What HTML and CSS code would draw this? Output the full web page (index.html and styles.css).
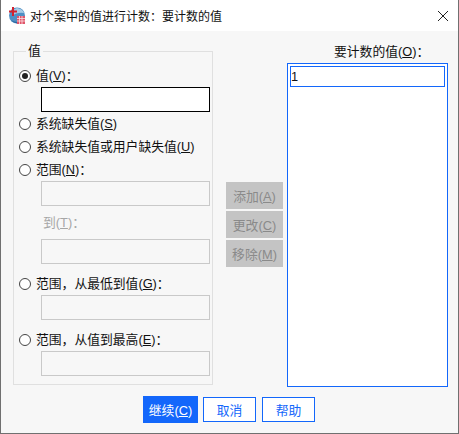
FILE: index.html
```html
<!DOCTYPE html>
<html lang="zh-CN">
<head>
  <meta charset="UTF-8" />
  <title>对个案中的值进行计数&#xFF1A;要计数的值</title>
  <link rel="stylesheet" href="styles.css">
</head>
<body>
  <div class="dialog">

    <!-- Title bar -->
    <div class="titlebar">
      <svg class="app-icon" width="16" height="17" viewBox="0 0 16 17">
        <circle cx="8" cy="8.5" r="8" fill="#4f8fc4"/>
        <path d="M3 9 Q8 5 15 6 Q14 2 8 1 Q4 2 3 5 Z" fill="#a9cbe6"/>
        <path d="M2 13 Q5 15 8 15 L8 16.5 Q4 16 2 13 Z" fill="#2c659c"/>
        <rect x="3" y="0" width="2" height="9" fill="#d2232f"/>
        <rect x="0" y="3.5" width="8" height="2" fill="#d2232f"/>
        <rect x="8" y="9" width="8" height="8" fill="#e0556a"/>
        <path d="M8 11.5 H16 M8 14 H16 M10.5 9 V17 M13 9 V17" stroke="#fbe3e6" stroke-width="0.8"/>
      </svg>
      <span class="title">对个案中的值进行计数&#xFF1A;要计数的值</span>
      <svg class="close" width="10" height="10" viewBox="0 0 10 10">
        <path d="M0 0 L10 10 M10 0 L0 10" stroke="#222" stroke-width="1" fill="none"/>
      </svg>
    </div>

    <div class="content">
      <div class="columns">

        <!-- Value group -->
        <fieldset class="group">
          <legend>值</legend>
          <label class="radio-row first"><span class="radio checked"></span>值(<u>V</u>)&#xFF1A;</label>
          <div class="field active"></div>
          <label class="radio-row"><span class="radio"></span>系统缺失值(<u>S</u>)</label>
          <label class="radio-row"><span class="radio"></span>系统缺失值或用户缺失值(<u>U</u>)</label>
          <label class="radio-row"><span class="radio"></span>范围(<u>N</u>)&#xFF1A;</label>
          <div class="field"></div>
          <div class="to-label">到(<u>T</u>)&#xFF1A;</div>
          <div class="field"></div>
          <label class="radio-row spaced"><span class="radio"></span>范围&#xFF0C;从最低到值(<u>G</u>)&#xFF1A;</label>
          <div class="field"></div>
          <label class="radio-row spaced"><span class="radio"></span>范围&#xFF0C;从值到最高(<u>E</u>)&#xFF1A;</label>
          <div class="field"></div>
        </fieldset>

        <!-- Add / change / remove -->
        <div class="actions">
          <button class="action">添加(<u>A</u>)</button>
          <button class="action">更改(<u>C</u>)</button>
          <button class="action">移除(<u>M</u>)</button>
        </div>

        <!-- Values to count -->
        <div class="values">
          <div class="values-label">要计数的值(<u>O</u>)&#xFF1A;</div>
          <div class="list">
            <div class="list-item">1</div>
          </div>
        </div>
      </div>

      <div class="footer">
        <button class="btn primary">继续(<u>C</u>)</button>
        <button class="btn">取消</button>
        <button class="btn">帮助</button>
      </div>
    </div>
  </div>
</body>
</html>
```

FILE: styles.css
```css
:root {
  --blue: #1367fb;
  --panel: #f7f7f7;
  --line: #c9c9c9;
  --font: "Liberation Sans", "Noto Sans CJK SC", sans-serif;
}

* {
  margin: 0;
  padding: 0;
  box-sizing: border-box;
  font-family: var(--font);
}

body {
  width: 459px;
  height: 434px;
  overflow: hidden;
  font-size: 12.8px;
  color: #111;
}

u {
  text-underline-offset: 1px;
}

.dialog {
  width: 459px;
  height: 434px;
  background: var(--panel);
  border: 1px solid #707070;
  border-top: none;
  display: flex;
  flex-direction: column;
}

.titlebar {
  height: 31px;
  background: #fff;
  display: flex;
  align-items: center;
  padding: 0 10px 0 8px;
}

.app-icon {
  margin-right: 5px;
}

.title {
  flex: 1;
  font-size: 12px;
}

.content {
  flex: 1;
  display: flex;
  flex-direction: column;
}

.columns {
  display: flex;
  height: 356px;
}

.group {
  width: 200px;
  height: 341px;
  margin: 13px 0 0 12px;
  padding: 0 2px 0 5px;
  border: 1px solid #e0e0e0;
}

.group legend {
  margin-left: 7px;
  padding: 0 2px;
  line-height: 14px;
}

.radio-row {
  display: flex;
  align-items: center;
  height: 23px;
  line-height: 23px;
  white-space: nowrap;
}

.radio-row.first {
  margin-top: 6px;
}

.radio-row.spaced {
  margin-top: 8px;
}

.radio {
  width: 12px;
  height: 12px;
  margin-right: 5px;
  border: 1.5px solid #444;
  border-radius: 50%;
  background: #fff;
  display: flex;
  align-items: center;
  justify-content: center;
}

.radio.checked::after {
  content: "";
  width: 6px;
  height: 6px;
  border-radius: 50%;
  background: #222;
}

.field {
  width: 169px;
  height: 25px;
  margin-left: 22px;
  border: 1px solid var(--line);
  background: var(--panel);
}

.field.active {
  border-color: #000;
  background: #fff;
}

.to-label {
  margin: 6px 0 0 24px;
  height: 27px;
  line-height: 21px;
  color: #a6a6a6;
}

.actions {
  width: 57px;
  margin: 151px 0 0 13px;
  display: flex;
  flex-direction: column;
  gap: 2px;
}

.action {
  height: 27px;
  border: none;
  background: #c4c4c4;
  color: #8a8a8a;
  font-size: 12.8px;
}

.values {
  width: 161px;
  margin-left: 4px;
  display: flex;
  flex-direction: column;
}

.values-label {
  height: 32px;
  padding: 11px 0 0 47px;
  line-height: 20px;
  white-space: nowrap;
}

.list {
  height: 324px;
  border: 1px solid var(--blue);
  background: #fff;
  padding: 2px;
}

.list-item {
  height: 21px;
  line-height: 19px;
  border: 1px solid var(--blue);
}

.footer {
  display: flex;
  align-items: center;
  margin: 9px 0 0 142px;
  height: 27px;
}

.btn {
  width: 53px;
  height: 25px;
  margin-right: 6px;
  border: 1px solid var(--blue);
  background: #fff;
  color: var(--blue);
  font-size: 12.8px;
}

.btn.primary {
  width: 55px;
  height: 27px;
  margin-right: 5px;
  background: var(--blue);
  color: #fff;
}
```
